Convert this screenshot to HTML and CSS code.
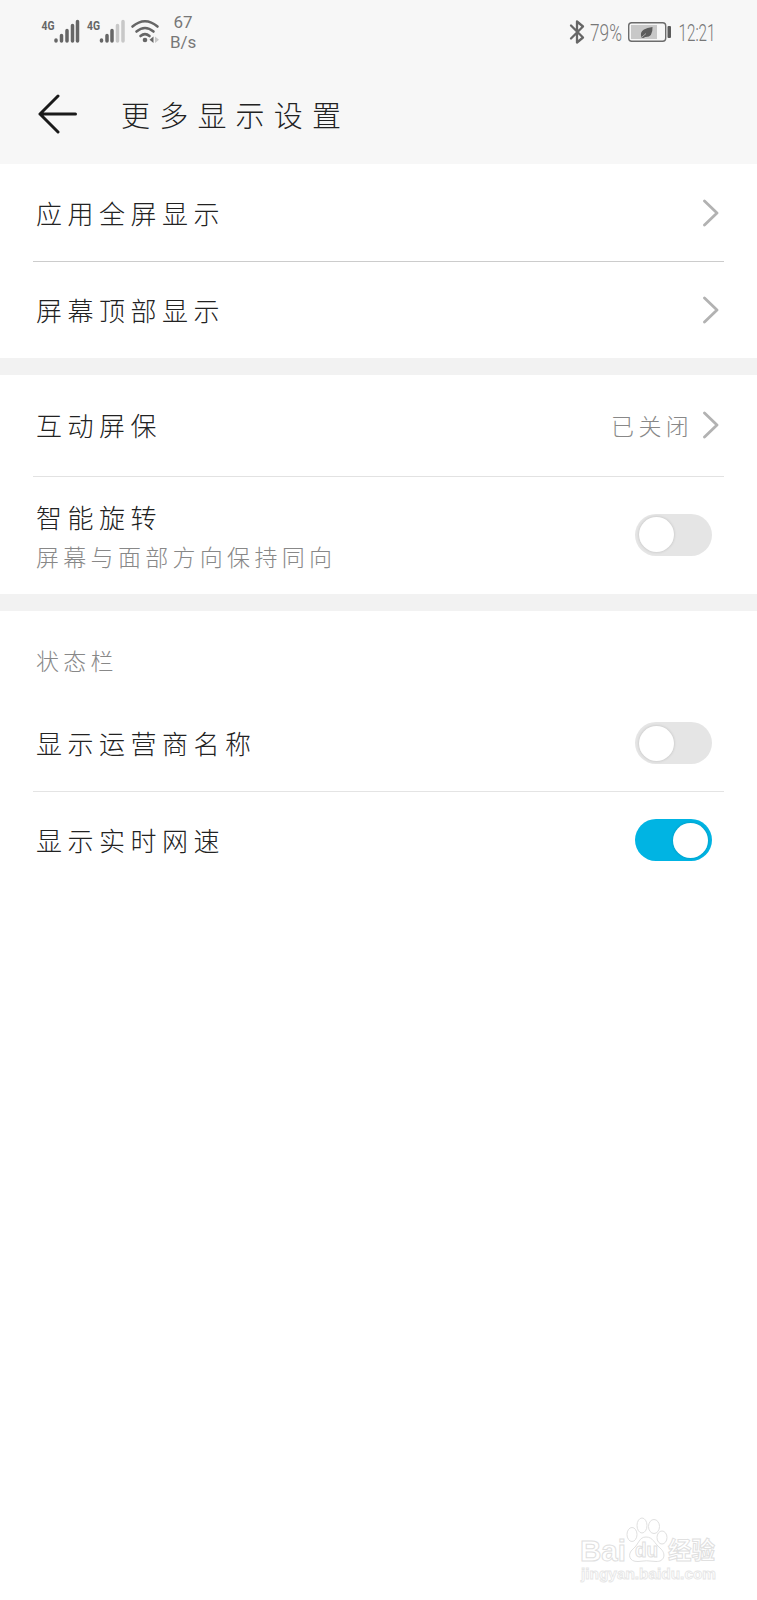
FILE: index.html
```
<!DOCTYPE html>
<html lang="zh-CN">

<head>
  <meta charset="UTF-8">
  <meta name="viewport" content="width=device-width, initial-scale=1.0">
  <title>更多显示设置</title>
  <link rel="stylesheet" href="styles.css">
</head>

<body>
  <header class="header">
    <div class="status-bar">
      <!-- signal, wifi -->
      <svg class="status-left" width="130" height="64" viewBox="0 0 130 64">
        <g class="network-text">
          <text x="1.5" y="30" textLength="13" lengthAdjust="spacingAndGlyphs">4G</text>
          <text x="47" y="30" textLength="13" lengthAdjust="spacingAndGlyphs">4G</text>
        </g>
        <g class="bars">
          <path d="M16 40v1M21.5 35.5v5.5M27 30.5v10.5M32.5 25.5v15.5M37.500 21.5v19.5"/>
          <path d="M61.5 40v1M67 35.5v5.5M72 30.5v10.5"/>
          <path class="bars-off" d="M77.5 25.5v15.5M83 21.5v19.5"/>
        </g>
        <g class="wifi">
          <path d="M92.5 26.5q12.5-10.5 25 0M96.5 31.5q8.500-7 17 0M100.5 36q4.500-3.800 9 0"/>
          <circle cx="105" cy="40" r="2.3"/>
          <path class="wifi-down" d="M113.5 36.5v6.5l-4-3.2z"/>
          <path class="wifi-up" d="M115 36.5v6.5l4-3.2z"/>
        </g>
      </svg>
      <div class="net-speed">67<br>B/s</div>

      <!-- bluetooth, battery, clock -->
      <svg class="status-right" width="156" height="64" viewBox="0 0 156 64">
        <path class="bluetooth" d="M2 25.5L14 37.5L8 42.5V21.5L14 26.5L2 38.5"/>
        <text class="thin-text" x="21" y="41" textLength="32" lengthAdjust="spacingAndGlyphs">79%</text>
        <rect class="battery" x="59.7" y="22.7" width="37" height="18.6" rx="3"/>
        <rect class="battery-level" x="62" y="25" width="26" height="14"/>
        <path class="leaf" d="M83.5 27Q84 37.5 76 37Q74.5 38.5 72.5 37.5Q70.5 32 75 29.5Q78 27.5 83.5 27z"/>
        <path class="leaf-vein" d="M73 37l4-3.500"/>
        <rect class="leaf" x="98.5" y="26" width="3.5" height="12" rx="1"/>
        <text class="thin-text" x="109.500" y="41" textLength="37" lengthAdjust="spacingAndGlyphs">12:21</text>
      </svg>
    </div>

    <div class="title-bar">
      <svg class="back" width="40" height="40" viewBox="0 0 40 40">
        <path d="M20 2L2 20L20 38M2 20H37.5"/>
      </svg>
      <h1>更多显示设置</h1>
    </div>
  </header>

  <main>
    <section class="group">
      <div class="row row-app">
        <span class="label">应用全屏显示</span>
        <svg class="chevron" width="16" height="28" viewBox="0 0 16 28"><path d="M1.5 2L14 14L1.5 26"/></svg>
      </div>
      <div class="row row-top">
        <span class="label">屏幕顶部显示</span>
        <svg class="chevron" width="16" height="28" viewBox="0 0 16 28"><path d="M1.5 2L14 14L1.5 26"/></svg>
      </div>
    </section>

    <section class="group">
      <div class="row row-saver">
        <span class="label">互动屏保</span>
        <span class="value">已关闭</span>
        <svg class="chevron" width="16" height="28" viewBox="0 0 16 28"><path d="M1.5 2L14 14L1.5 26"/></svg>
      </div>
      <div class="row row-rotate">
        <div class="label-block">
          <div class="label">智能旋转</div>
          <div class="desc">屏幕与面部方向保持同向</div>
        </div>
        <span class="switch"><span class="knob"></span></span>
      </div>
    </section>

    <section class="group">
      <h2>状态栏</h2>
      <div class="row row-carrier">
        <span class="label">显示运营商名称</span>
        <span class="switch"><span class="knob"></span></span>
      </div>
      <div class="row row-speed">
        <span class="label">显示实时网速</span>
        <span class="switch on"><span class="knob"></span></span>
      </div>
    </section>
  </main>

  <footer>
    <svg class="watermark" width="170" height="100" viewBox="0 0 170 100">
      <g class="paw">
        <ellipse cx="65" cy="34.5" rx="5" ry="7"/>
        <ellipse cx="75" cy="25.5" rx="5" ry="7.5"/>
        <ellipse cx="87" cy="26.5" rx="5.5" ry="7"/>
        <ellipse cx="95" cy="37.5" rx="5" ry="6.5"/>
        <path d="M79 37C86 37 87 43 93 48C100 54 97 62 89 61.5Q79 60 71 61.5C62 62 60 54 66 49C72 44 72 37 79 37z"/>
      </g>
      <g class="outline-text">
        <text class="brand" x="13" y="61" textLength="46" lengthAdjust="spacingAndGlyphs">Bai</text>
        <text class="du" x="68" y="57" textLength="23" lengthAdjust="spacingAndGlyphs">du</text>
        <text class="brand-cn" x="101" y="59" textLength="47" lengthAdjust="spacingAndGlyphs">经验</text>
      </g>
      <text class="site" x="14" y="79" textLength="135" lengthAdjust="spacingAndGlyphs">jingyan.baidu.com</text>
    </svg>
  </footer>
</body>

</html>
```
FILE: styles.css
```
* {
  box-sizing: border-box;
}

body {
  display: flex;
  flex-direction: column;
  min-height: 1600px;
  margin: 0;
  background: #fff;
  color: #222;
  font-family: "Noto Sans CJK SC", sans-serif;
  font-weight: 300;
}

h1, h2 {
  margin: 0;
  font-weight: 300;
}

svg {
  display: block;
  flex: none;
}

/* Header */
.header {
  height: 164px;
  background: #f7f7f7;
}

.status-bar {
  display: flex;
  height: 64px;
  padding: 0 32px 0 40px;
}

.net-speed {
  width: 26px;
  padding-top: 12px;
  color: #777;
  font-family: Roboto, sans-serif;
  font-size: 17px;
  font-weight: 400;
  line-height: 20px;
  text-align: center;
}

.status-right {
  margin-left: auto;
}

.network-text {
  fill: #666;
  font-family: Roboto, sans-serif;
  font-size: 13px;
  font-weight: 700;
}

.bars {
  fill: none;
  stroke: #666;
  stroke-width: 3.5;
  stroke-linecap: round;
}

.bars-off {
  stroke: #c8c8c8;
}

.wifi {
  fill: none;
  stroke: #666;
  stroke-width: 2.6;
  stroke-linecap: round;
}

.wifi circle, .wifi-down {
  fill: #666;
  stroke: none;
}

.wifi-up {
  fill: #c8c8c8;
  stroke: none;
}

.bluetooth {
  fill: none;
  stroke: #666;
  stroke-width: 2.3;
  stroke-linejoin: round;
  stroke-linecap: round;
}

.thin-text {
  fill: #777;
  font-family: Roboto, sans-serif;
  font-size: 23px;
  font-weight: 300;
}

.battery {
  fill: none;
  stroke: #6c6c6c;
  stroke-width: 1.4;
}

.battery-level {
  fill: #c8c8c8;
}

.leaf {
  fill: #5c5c5c;
}

.leaf-vein {
  stroke: #aaa;
  stroke-width: 1;
}

.title-bar {
  display: flex;
  height: 100px;
  padding-left: 38px;
}

.back {
  margin-top: 30px;
  fill: none;
  stroke: #1a1a1a;
  stroke-width: 3;
  stroke-linecap: round;
  stroke-linejoin: round;
}

h1 {
  padding-top: 26px;
  padding-left: 43px;
  font-size: 29px;
  line-height: 48px;
  letter-spacing: 9.2px;
}

/* Settings list */
.group + .group {
  border-top: 17px solid #f2f2f2;
}

.row {
  display: flex;
  align-items: center;
  height: 97px;
  margin: 0 33px;
  padding: 0 5px 0 3px;
}

.row-app {
  height: 98px;
  border-bottom: 1px solid #ccc;
}

.row-top {
  height: 96px;
}

.row-saver {
  height: 102px;
  padding-bottom: 2px;
  border-bottom: 1px solid #e2e2e2;
}

.row-rotate {
  height: 117px;
}

.row-rotate .switch {
  margin-bottom: 2px;
}

.row-carrier {
  border-bottom: 1px solid #e4e4e4;
}

.row-speed {
  height: 96px;
}

.label {
  font-size: 26px;
  line-height: 40px;
  letter-spacing: 5.5px;
}

.desc, .value, h2 {
  color: #888;
  font-size: 23px;
  line-height: 38px;
  letter-spacing: 4.3px;
}

.chevron {
  margin-left: auto;
  fill: none;
  stroke: #b2b2b2;
  stroke-width: 2.8;
  stroke-linecap: round;
  stroke-linejoin: round;
}

.value {
  margin-left: auto;
}

.value + .chevron {
  margin-left: 10px;
}

h2 {
  height: 84px;
  padding: 30px 36px 0;
}

.switch {
  display: flex;
  align-items: center;
  flex: none;
  width: 77px;
  height: 42px;
  margin-left: auto;
  margin-right: 7px;
  padding: 0 4px;
  border-radius: 21px;
  background: #e5e5e5;
}

.knob {
  width: 35px;
  height: 35px;
  border-radius: 50%;
  background: #fff;
  box-shadow: 0 0 3px rgba(0, 0, 0, 0.18);
}

.switch.on {
  justify-content: flex-end;
  background: #00b4e3;
}

/* Watermark */
footer {
  display: flex;
  justify-content: flex-end;
  margin-top: auto;
  padding-right: 20px;
}

.paw, .outline-text {
  fill: #fff;
  stroke: #e0e0e0;
  stroke-width: 1;
}

.brand, .du {
  font-family: "Liberation Sans", sans-serif;
  font-weight: 700;
}

.brand {
  font-size: 30px;
}

.du {
  font-size: 20px;
}

.brand-cn {
  font-size: 24px;
  font-weight: 700;
}

.site {
  fill: #fff;
  stroke: #e6e6e6;
  stroke-width: 0.8;
  font-family: "Liberation Sans", sans-serif;
  font-size: 14px;
  font-weight: 700;
}
```
